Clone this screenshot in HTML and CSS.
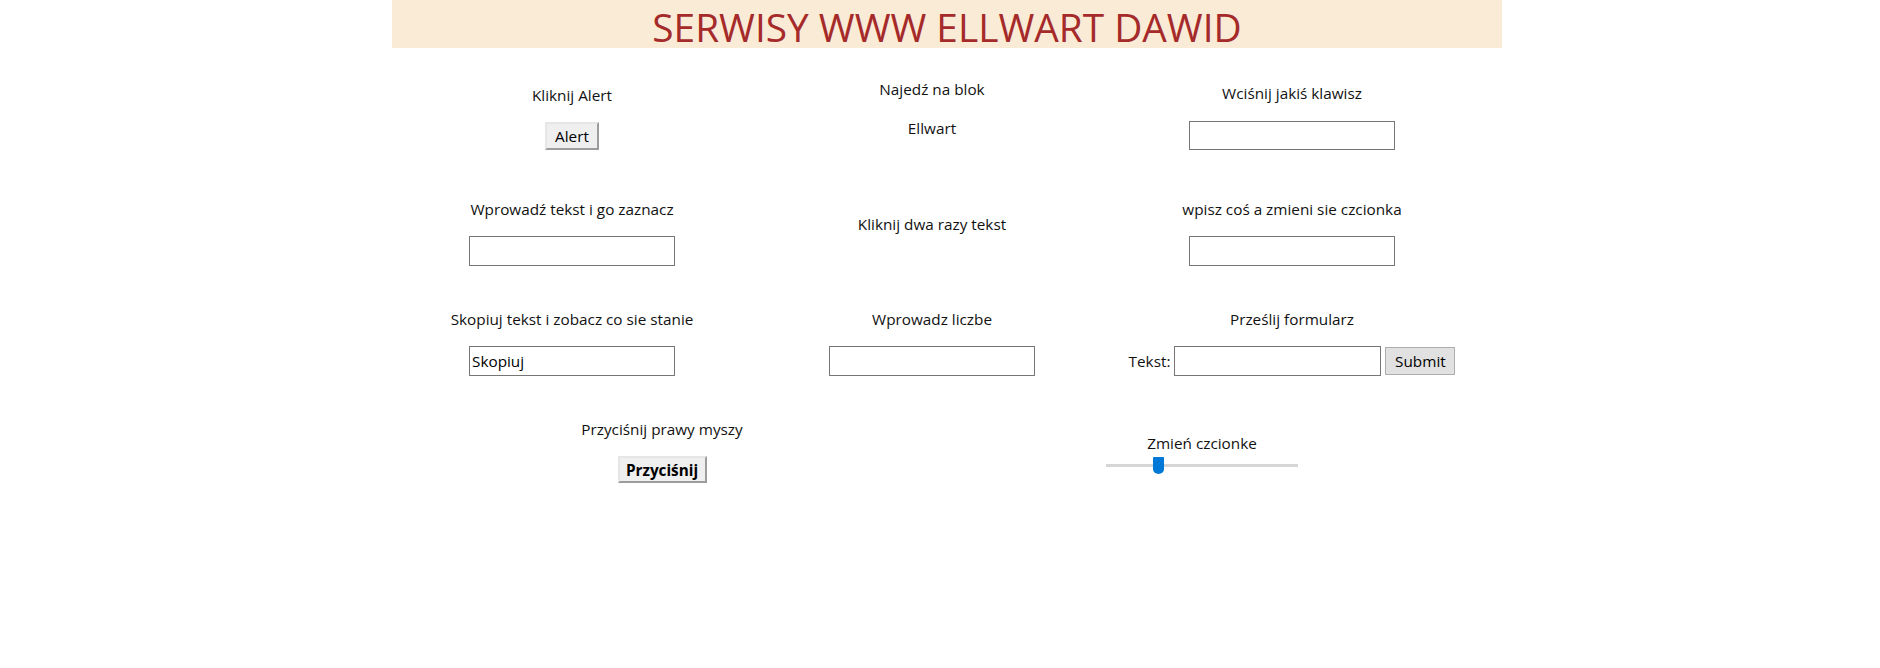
FILE: index.html
```html
<!DOCTYPE html>
<html lang="pl">
<head>
<meta charset="utf-8">
<title>Serwisy WWW Ellwart Dawid</title>
<link rel="stylesheet" href="styles.css">
</head>
<body>
<div class="page">
  <header class="header">
    <h1 class="title">SERWISY WWW ELLWART DAWID</h1>
  </header>

  <section class="row row-1">
    <div class="cell pad-37">
      <p class="label">Kliknij Alert</p>
      <button class="btn btn-alert" type="button">Alert</button>
    </div>
    <div class="cell pad-31">
      <p class="label">Najedź na blok</p>
      <p class="label hover-block">Ellwart</p>
    </div>
    <div class="cell pad-35">
      <p class="label">Wciśnij jakiś klawisz</p>
      <input class="field field-tight" type="text">
    </div>
  </section>

  <section class="row row-2">
    <div class="cell pad-29">
      <p class="label">Wprowadź tekst i go zaznacz</p>
      <input class="field" type="text">
    </div>
    <div class="cell pad-44">
      <p class="label">Kliknij dwa razy tekst</p>
    </div>
    <div class="cell pad-29">
      <p class="label">wpisz coś a zmieni sie czcionka</p>
      <input class="field" type="text">
    </div>
  </section>

  <section class="row row-3">
    <div class="cell pad-29">
      <p class="label">Skopiuj tekst i zobacz co sie stanie</p>
      <input class="field" type="text" value="Skopiuj">
    </div>
    <div class="cell pad-29">
      <p class="label">Wprowadz liczbe</p>
      <input class="field" type="text">
    </div>
    <div class="cell pad-29">
      <p class="label">Prześlij formularz</p>
      <form class="form-line">
        <label class="form-label" for="tekst">Tekst:</label>
        <input class="field" id="tekst" type="text">
        <input class="btn-submit" type="submit" value="Submit">
      </form>
    </div>
  </section>

  <section class="row row-4">
    <div class="cell pad-30">
      <p class="label">Przyciśnij prawy myszy</p>
      <button class="btn btn-bold" type="button">Przyciśnij</button>
    </div>
    <div class="cell pad-43">
      <p class="label">Zmień czcionke</p>
      <input class="slider" type="range" min="0" max="100" value="26">
    </div>
  </section>
</div>
</body>
</html>
```

FILE: styles.css
```css
html, body {
  margin: 0;
  padding: 0;
  background: #ffffff;
}

body {
  font-family: "Segoe UI", "Open Sans", "Noto Sans", sans-serif;
  font-size: 15.3px;
  color: #111111;
}

.page {
  width: 1110px;
  margin: 0 auto;
  padding-left: 14px;
}

.header {
  background: #faebd7;
  height: 48px;
  text-align: center;
}

.title {
  margin: 0;
  padding-top: 6px;
  font-size: 38.8px;
  font-weight: 400;
  line-height: 42px;
  color: #a52a2a;
  white-space: nowrap;
}

.row {
  display: grid;
  grid-template-columns: repeat(3, 360px);
}

.row-1 { height: 122px; }
.row-2 { height: 110px; }
.row-3 { height: 110px; }
.row-4 {
  height: 120px;
  grid-template-columns: repeat(2, 540px);
}

.cell {
  display: flex;
  flex-direction: column;
  align-items: center;
}

.pad-29 { padding-top: 29px; }
.pad-30 { padding-top: 29px; }
.pad-31 { padding-top: 31px; }
.pad-35 { padding-top: 35px; }
.pad-37 { padding-top: 37px; }
.pad-43 { padding-top: 43px; }
.pad-44 { padding-top: 44px; }

.label {
  margin: 0;
  line-height: 20px;
  white-space: nowrap;
}

.hover-block {
  margin-top: 19px;
}

.field {
  box-sizing: border-box;
  width: 206px;
  height: 30px;
  margin: 17px 0 0;
  padding: 1px 2px;
  border: 1px solid #767676;
  border-radius: 0;
  background: #ffffff;
  font-family: inherit;
  font-size: 15.3px;
  color: #000000;
  outline: none;
}

.field-tight {
  margin-top: 18px;
  height: 29px;
}

.btn {
  box-sizing: border-box;
  margin-top: 17px;
  padding: 0;
  background: #efefef;
  border-style: solid;
  border-width: 2px;
  border-color: #e6e6e6 #9c9c9c #9c9c9c #e6e6e6;
  border-radius: 0;
  font-family: inherit;
  font-size: 15.3px;
  color: #000000;
  line-height: 20px;
}

.btn-alert {
  width: 54px;
  height: 28px;
}

.btn-bold {
  margin-top: 17px;
  width: 89px;
  height: 27px;
  font-weight: 700;
}

.form-line {
  display: flex;
  align-items: center;
  gap: 4px;
  margin: 17px 0 0;
}

.form-line .field {
  margin-top: 0;
  width: 207px;
}

.form-label {
  line-height: 20px;
  white-space: nowrap;
}

.btn-submit {
  box-sizing: border-box;
  margin: 0;
  width: 70px;
  height: 28px;
  padding: 0;
  background: #e1e1e1;
  border: 1px solid #adadad;
  border-radius: 0;
  font-family: inherit;
  font-size: 15.3px;
  color: #000000;
}

.slider {
  -webkit-appearance: none;
  appearance: none;
  width: 192px;
  height: 17px;
  margin: 4px 0 0;
  padding: 0;
  background: transparent;
}

.slider::-webkit-slider-runnable-track {
  height: 3px;
  background: #d6d6d6;
  border: none;
}

.slider::-webkit-slider-thumb {
  -webkit-appearance: none;
  appearance: none;
  width: 11px;
  height: 17px;
  margin-top: -7px;
  background: #0078d7;
  border: none;
  border-radius: 1px 1px 50% 50% / 1px 1px 30% 30%;
}
```
